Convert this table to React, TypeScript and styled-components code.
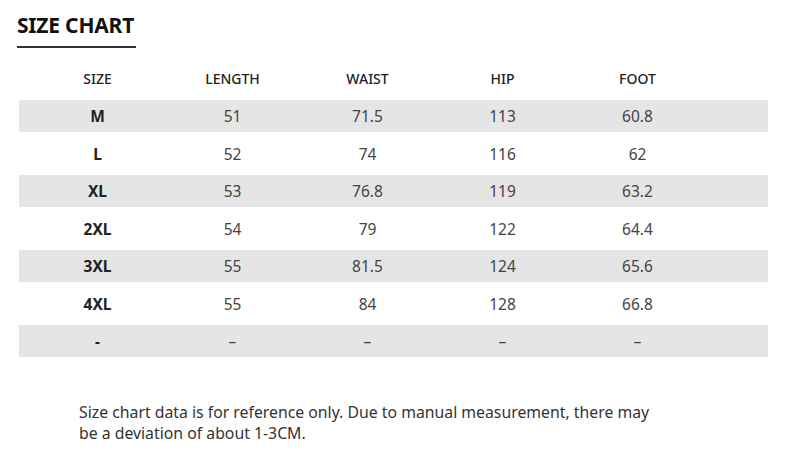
import React from "react";
import styled, { createGlobalStyle } from "styled-components";

const GlobalStyle = createGlobalStyle`
  body {
    margin: 0;
    background: #ffffff;
    font-family: "Noto Sans", "Open Sans", sans-serif;
  }
`;

const Page = styled.div`
  width: 790px;
  height: 451px;
  padding-top: 12px;
  box-sizing: border-box;
  background: #ffffff;
`;

const TitleBlock = styled.div`
  margin-left: 17px;
  width: 119px;
  padding-bottom: 7px;
  border-bottom: 2px solid #333333;
`;

const Title = styled.h1`
  margin: 0;
  font-size: 21px;
  line-height: 27px;
  font-weight: 700;
  color: #111111;
  letter-spacing: -0.2px;
`;

const Table = styled.div`
  margin: 14px 22px 0 19px;
`;

const Row = styled.div<{ $shade?: boolean; $height: number }>`
  display: grid;
  grid-template-columns: repeat(5, 135px);
  align-items: center;
  padding-left: 11px;
  height: ${(p) => p.$height}px;
  background: ${(p) => (p.$shade ? "#e5e5e5" : "transparent")};
`;

const HeadRow = styled(Row)`
  margin-bottom: 6px;
`;

const HeadCell = styled.div`
  text-align: center;
  font-size: 14px;
  font-weight: 500;
  color: #222222;
`;

const Cell = styled.div<{ $bold?: boolean }>`
  text-align: center;
  font-size: 15.5px;
  font-weight: ${(p) => (p.$bold ? 700 : 400)};
  color: ${(p) => (p.$bold ? "#222222" : "#444444")};
`;

const Note = styled.p`
  margin: 45px 0 0 79px;
  width: 576px;
  font-size: 15.8px;
  line-height: 21px;
  color: #333333;
`;

const headers = ["SIZE", "LENGTH", "WAIST", "HIP", "FOOT"];

const rows: string[][] = [
  ["M", "51", "71.5", "113", "60.8"],
  ["L", "52", "74", "116", "62"],
  ["XL", "53", "76.8", "119", "63.2"],
  ["2XL", "54", "79", "122", "64.4"],
  ["3XL", "55", "81.5", "124", "65.6"],
  ["4XL", "55", "84", "128", "66.8"],
  ["-", "–", "–", "–", "–"],
];

const App: React.FC = () => {
  return (
    <Page>
      <GlobalStyle />
      <TitleBlock>
        <Title>SIZE CHART</Title>
      </TitleBlock>
      <Table>
        <HeadRow $height={32}>
          {headers.map((h) => (
            <HeadCell key={h}>{h}</HeadCell>
          ))}
        </HeadRow>
        {rows.map((r, i) => (
          <Row key={i} $shade={i % 2 === 0} $height={i % 2 === 0 ? 32 : 43}>
            {r.map((c, j) => (
              <Cell key={j} $bold={j === 0}>
                {c}
              </Cell>
            ))}
          </Row>
        ))}
      </Table>
      <Note>
        Size chart data is for reference only. Due to manual measurement, there may be a
        deviation of about 1-3CM.
      </Note>
    </Page>
  );
};

export default App;
